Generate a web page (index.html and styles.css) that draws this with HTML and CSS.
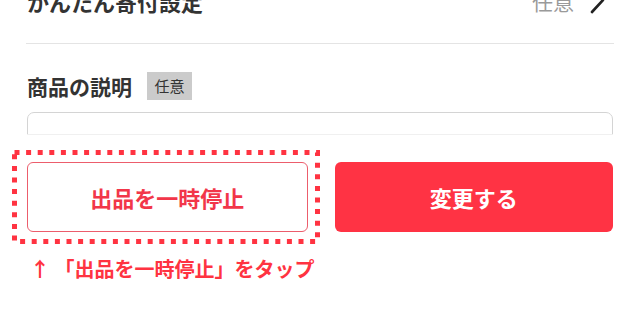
FILE: index.html
```html
<!DOCTYPE html>
<html lang="ja">
<head>
    <meta charset="UTF-8">
    <meta name="viewport" content="width=device-width, initial-scale=1.0">
    <title>出品を一時停止</title>
    <link rel="stylesheet" href="styles.css">
</head>
<body>
    <div class="page">
        <!-- かんたん寄付設定の行 -->
        <div class="setting-row">
            <span class="setting-title">かんたん寄付設定</span>
            <span class="setting-value">任意</span>
            <svg class="chevron" width="16" height="28" viewBox="0 0 16 28">
                <polyline points="3,1 14,13 3,25" fill="none" stroke="#222" stroke-width="2.6" stroke-linecap="round" stroke-linejoin="round"/>
            </svg>
        </div>

        <!-- 商品の説明 -->
        <div class="section-head">
            <span class="section-title">商品の説明</span>
            <span class="badge">任意</span>
        </div>
        <div class="textarea-clip">
            <div class="textarea-box"></div>
        </div>

        <!-- ボタン -->
        <div class="button-row">
            <div class="btn btn-outline">
                出品を一時停止
                <svg class="dotted-frame" width="308" height="94" viewBox="0 0 308 94">
                    <rect x="2.5" y="2.5" width="303" height="89" fill="none" stroke="#ff3341" stroke-width="5" stroke-dasharray="5 6.6"/>
                </svg>
            </div>
            <div class="btn btn-primary">変更する</div>
        </div>

        <p class="caption">↑ 「出品を一時停止」をタップ</p>
    </div>
</body>
</html>
```

FILE: styles.css
```css
body {
    margin: 0;
    background-color: #fff;
    font-family: "Noto Sans CJK JP", "Noto Sans", sans-serif;
    color: #333;
    overflow: hidden;
}

.page {
    width: 640px;
}

.setting-row {
    display: flex;
    align-items: center;
    margin: -15px 26px 0 26px;
    height: 32px;
    padding-bottom: 26px;
    border-bottom: 1px solid #e4e4e4;
}

.setting-title {
    flex: 1;
    font-size: 22px;
    font-weight: 700;
    line-height: 32px;
    padding-left: 1px;
}

.setting-value {
    font-size: 21px;
    color: #9a9a9a;
    line-height: 32px;
}

.chevron {
    margin-left: 15px;
    margin-right: 9px;
}

.section-head {
    display: flex;
    align-items: center;
    margin: 28px 27px 0 27px;
    height: 28px;
}

.section-title {
    font-size: 21px;
    font-weight: 700;
    line-height: 28px;
}

.badge {
    margin-left: 15px;
    background-color: #cbcbcb;
    font-size: 15px;
    line-height: 28px;
    width: 45px;
    text-align: center;
    color: #333;
}

.textarea-clip {
    margin: 12px 27px 0 27px;
    height: 22px;
    overflow: hidden;
    border-bottom: 1px solid #f0f0f0;
}

.textarea-box {
    height: 60px;
    border: 1.5px solid #d4d4d4;
    border-radius: 7px;
}

.button-row {
    display: flex;
    gap: 27px;
    margin: 27px 27px 0 27px;
}

.btn {
    flex: 1 1 0;
    height: 70px;
    box-sizing: border-box;
    border-radius: 6px;
    display: flex;
    align-items: center;
    justify-content: center;
    font-size: 22px;
    font-weight: 700;
}

.btn-outline {
    position: relative;
    border: 1.5px solid #ec5d6c;
    color: #f23649;
    background-color: #fff;
}

.btn-primary {
    background-color: #ff3344;
    color: #fff;
}

/* 注釈の点線枠 */
.dotted-frame {
    position: absolute;
    left: -16.5px;
    top: -13.5px;
}

.caption {
    margin: 24px 0 0 30px;
    font-size: 20px;
    font-weight: 700;
    line-height: 26px;
    color: #ff3341;
}
```
